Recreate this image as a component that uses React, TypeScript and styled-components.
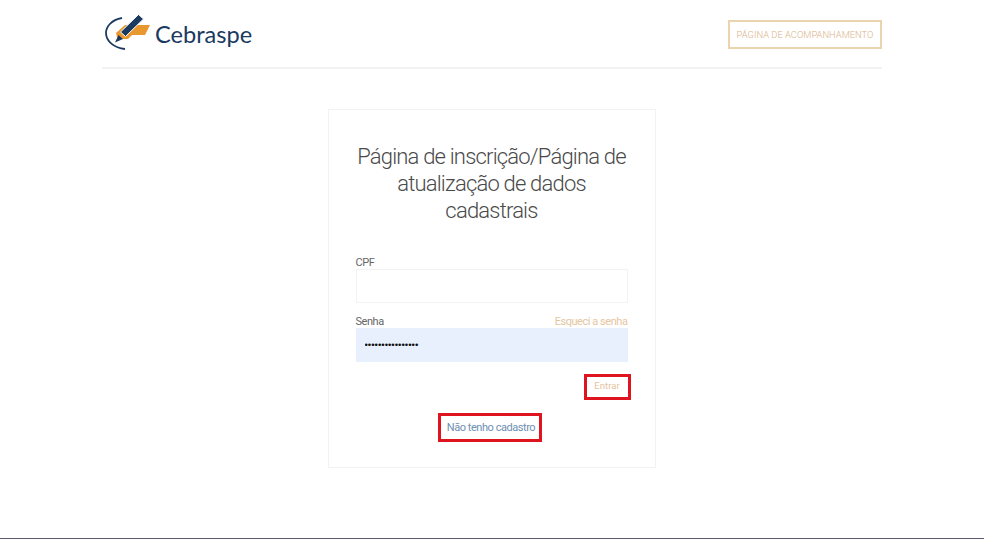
import React from 'react';
import styled, { createGlobalStyle } from 'styled-components';

const COLORS = {
	navy: '#1b3a5f',
	orange: '#e8982e',
	sand: '#ecd3b0',
	sandText: '#e5c5a0',
	line: '#f2f2f2',
	text: '#4a4a4a',
	label: '#666666',
	link: '#6f8fb3',
	red: '#e0141f',
	autofill: '#e8f0fe'
};

const GlobalStyle = createGlobalStyle`
	html, body {
		margin: 0;
		padding: 0;
		background: #ffffff;
		font-family: Roboto, "Liberation Sans", sans-serif;
	}
`;

const Page = styled.div`
	height: 539px;
	display: flex;
	flex-direction: column;
	overflow: hidden;
	box-sizing: border-box;
	border-bottom: 1px solid #5b5870;
`;

const Header = styled.header`
	width: 780px;
	height: 69px;
	margin-left: 102px;
	box-sizing: border-box;
	padding: 12px 0 0 3px;
	display: flex;
	justify-content: space-between;
	align-items: flex-start;
	border-bottom: 2px solid ${COLORS.line};
`;

const Brand = styled.div`
	display: flex;
	align-items: center;
	gap: 4px;
	height: 40px;
`;

const BrandName = styled.span`
	font-family: Lato, "Liberation Sans", sans-serif;
	font-size: 23.6px;
	font-weight: 400;
	color: ${COLORS.navy};
	position: relative;
	top: 2px;
`;

const TrackButton = styled.a`
	width: 154px;
	height: 29px;
	margin-top: 8px;
	box-sizing: border-box;
	border: 2px solid ${COLORS.sand};
	display: flex;
	align-items: center;
	justify-content: center;
	font-size: 9.4px;
	font-weight: 300;
	color: #d9b48a;
	white-space: nowrap;
`;

const Main = styled.main`
	flex: 1;
	padding-top: 40px;
	display: flex;
	justify-content: center;
`;

const Card = styled.section`
	width: 328px;
	height: 359px;
	box-sizing: border-box;
	margin-left: -1px;
	border: 1px solid ${COLORS.line};
	padding: 33px 27px 0;
	display: flex;
	flex-direction: column;
`;

const Title = styled.h1`
	margin: 0 0 31px;
	font-size: 22px;
	line-height: 27px;
	font-weight: 300;
	letter-spacing: -0.8px;
	color: ${COLORS.text};
	text-align: center;
`;

const LabelRow = styled.div`
	display: flex;
	justify-content: space-between;
	align-items: baseline;
	height: 14px;
	line-height: 16px;
`;

const FieldLabel = styled.label`
	font-size: 11px;
	letter-spacing: -0.45px;
	color: ${COLORS.label};
`;

const Forgot = styled.a`
	font-size: 11px;
	letter-spacing: -0.45px;
	color: ${COLORS.sandText};
`;

const Input = styled.input<{ filled?: boolean }>`
	display: block;
	width: 100%;
	height: 34px;
	box-sizing: border-box;
	margin: 0 0 11px;
	padding: 0 8px 2px;
	outline: none;
	font-family: "Liberation Sans", sans-serif;
	font-size: 9.6px;
	color: #111111;
	background: ${({ filled }) => (filled ? COLORS.autofill : '#ffffff')};
	border: 1px solid ${({ filled }) => (filled ? COLORS.autofill : COLORS.line)};
`;

const Actions = styled.div`
	display: flex;
	justify-content: flex-end;
	margin: 1px -3px 13px 0;
`;

const SubmitButton = styled.button`
	width: 47px;
	height: 26px;
	box-sizing: border-box;
	padding: 0 0 4px;
	background: #ffffff;
	border: 3px solid ${COLORS.red};
	font-family: inherit;
	font-size: 9.6px;
	color: ${COLORS.sandText};
`;

const Center = styled.div`
	display: flex;
	justify-content: center;
	margin-right: 3px;
`;

const RegisterLink = styled.a`
	width: 104px;
	height: 29px;
	box-sizing: border-box;
	border: 3px solid ${COLORS.red};
	padding-left: 2px;
	display: flex;
	align-items: center;
	justify-content: center;
	font-size: 11px;
	letter-spacing: -0.45px;
	color: ${COLORS.link};
	white-space: nowrap;
`;

const Logo = () => (
	<svg width="46" height="40" viewBox="0 0 46 40" aria-hidden="true">
		<path d="M17 6 C6 8 1 15 1 21 C1 29 9 36 20 37" fill="none" stroke={COLORS.navy} strokeWidth="1.8" />
		<path d="M20 13 H45 L40 23 H27 L23 27 H12.5 L11 21 Z" fill={COLORS.orange} />
		<path d="M33.5 2.5 L38.5 7 L20.5 24.5 L15.5 20 Z" fill={COLORS.navy} stroke="#ffffff" strokeWidth="1" />
		<path d="M13.5 23 L18 27 L10 30.5 Z" fill={COLORS.navy} />
	</svg>
);

export default function App() {
	return (
		<>
			<GlobalStyle />
			<Page>
				<Header>
					<Brand>
						<Logo />
						<BrandName>Cebraspe</BrandName>
					</Brand>
					<TrackButton>PÁGINA DE ACOMPANHAMENTO</TrackButton>
				</Header>
				<Main>
					<Card>
						<Title>Página de inscrição/Página de atualização de dados cadastrais</Title>
						<LabelRow>
							<FieldLabel>CPF</FieldLabel>
						</LabelRow>
						<Input type="text" readOnly />
						<LabelRow>
							<FieldLabel>Senha</FieldLabel>
							<Forgot>Esqueci a senha</Forgot>
						</LabelRow>
						<Input type="password" filled readOnly value="0000000000000000" />
						<Actions>
							<SubmitButton>Entrar</SubmitButton>
						</Actions>
						<Center>
							<RegisterLink>Não tenho cadastro</RegisterLink>
						</Center>
					</Card>
				</Main>
			</Page>
		</>
	);
}
